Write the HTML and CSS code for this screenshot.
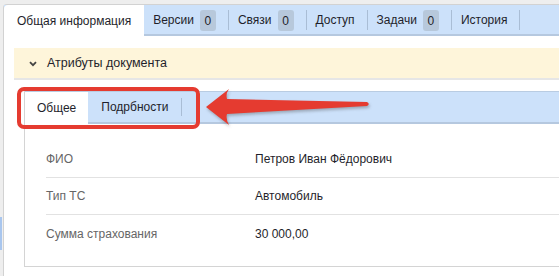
FILE: index.html
```html
<!DOCTYPE html>
<html lang="ru">
<head>
    <meta charset="UTF-8">
    <meta name="viewport" content="width=device-width, initial-scale=1.0">
    <title>Карточка документа</title>
    <link rel="stylesheet" href="styles.css">
</head>
<body>
    <div class="panel">
        <nav class="tabs">
            <div class="tab active">Общая информация</div>
            <div class="tab">Версии <span class="badge">0</span></div>
            <div class="tab">Связи <span class="badge">0</span></div>
            <div class="tab">Доступ</div>
            <div class="tab">Задачи <span class="badge">0</span></div>
            <div class="tab">История</div>
        </nav>

        <div class="panel-body">
            <div class="group-head">
                <svg class="chevron" width="8" height="6" viewBox="0 0 8 6">
                    <path d="M1 1.2 L4 4.2 L7 1.2" fill="none" stroke="#444" stroke-width="1.8"/>
                </svg>
                <span>Атрибуты документа</span>
            </div>

            <div class="section">
                <div class="subtabs">
                    <div class="subtab active">Общее</div>
                    <div class="subtab">Подрбности</div>
                </div>
                <div class="rows">
                    <div class="row">
                        <span class="label">ФИО</span>
                        <span class="value">Петров Иван Фёдорович</span>
                    </div>
                    <div class="row">
                        <span class="label">Тип ТС</span>
                        <span class="value">Автомобиль</span>
                    </div>
                    <div class="row">
                        <span class="label">Сумма страхования</span>
                        <span class="value">30 000,00</span>
                    </div>
                </div>
            </div>
        </div>
    </div>

    <!-- annotation over the screenshot -->
    <div class="callout"></div>
    <svg class="arrow" width="180" height="52" viewBox="0 0 180 52">
        <path d="M6 27 L29 9 Q25.5 14 27 19 L167 22 Q170.5 23.8 167 26 L27 34 Q25.5 39 29 45 Z" fill="#e53b30"/>
    </svg>
    <div class="edge-mark"></div>
</body>
</html>
```

FILE: styles.css
```css
html, body {
    height: 100%;
}

body {
    margin: 0;
    padding: 0;
    background-color: #eeeeee;
    font-family: "Liberation Sans", Arial, sans-serif;
    font-size: 12px;
    color: #1f1f2b;
    overflow: hidden;
}

.panel {
    box-sizing: border-box;
    margin: 4px 0 0 3px;
    height: calc(100% - 4px);
    background-color: #ffffff;
    border: 1px solid #d2d2d2;
    border-right: none;
    border-bottom: none;
    border-top-left-radius: 4px;
}

.tabs {
    display: flex;
    height: 29px;
    background-color: #cce1fa;
    border-bottom: 2px solid #b5c8df;
}

.tab {
    display: flex;
    align-items: center;
    gap: 6px;
    padding: 0 0 0 9px;
}

.tab::after {
    content: '';
    width: 1px;
    height: 20px;
    margin-left: 6px;
    background-color: #a9bdd5;
}

.tab.active {
    background-color: #ffffff;
    padding: 0 13px 0 13px;
    margin-bottom: -2px;
    border-top-left-radius: 4px;
}

.tab.active::after {
    display: none;
}

.badge {
    display: inline-flex;
    align-items: center;
    justify-content: center;
    width: 16px;
    height: 21px;
    margin-top: 2px;
    background-color: #b7c8db;
    border-radius: 3px;
}

.panel-body {
    padding: 12px 0 0 10px;
}

.group-head {
    display: flex;
    align-items: center;
    gap: 10px;
    height: 30px;
    padding-left: 15px;
    font-size: 12.5px;
    background-color: #fef5da;
    border-bottom: 2px solid #e6e6e6;
}

.chevron {
    margin-top: 1px;
}

.section {
    margin: 11px 0 0 10px;
    border-left: 1px solid #d4d4d4;
    border-bottom: 1px solid #d4d4d4;
}

.subtabs {
    display: flex;
    height: 30px;
    background-color: #cce1fa;
    border-top: 1px solid #b9cce2;
    border-bottom: 2px solid #b5c8df;
}

.subtab {
    display: flex;
    align-items: center;
    padding: 0 0 0 13px;
}

.subtab::after {
    content: '';
    width: 1px;
    height: 18px;
    margin-left: 13px;
    background-color: #a9bdd5;
}

.subtab.active {
    background-color: #ffffff;
    padding: 0 12px 0 12px;
    margin-bottom: -2px;
}

.subtab.active::after {
    display: none;
}

.rows {
    margin-left: 21px;
    padding: 17px 0 14px;
}

.row {
    display: grid;
    grid-template-columns: 209px 1fr;
    align-items: center;
    height: 36px;
    border-bottom: 1px solid #e2e2e2;
}

.row:last-child {
    border-bottom: none;
    height: 37px;
}

.label {
    color: #666666;
}

.value {
    color: #1f1f2b;
}

.callout {
    position: absolute;
    left: 17px;
    top: 87px;
    width: 175px;
    height: 34px;
    border: 4px solid #e53b30;
    border-radius: 7px;
}

.arrow {
    position: absolute;
    left: 200px;
    top: 80px;
    filter: drop-shadow(1px 2px 1.5px rgba(60, 60, 60, 0.35));
}

.edge-mark {
    position: absolute;
    left: 0;
    top: 217px;
    width: 2px;
    height: 33px;
    background-color: #a9c6ee;
}
```
